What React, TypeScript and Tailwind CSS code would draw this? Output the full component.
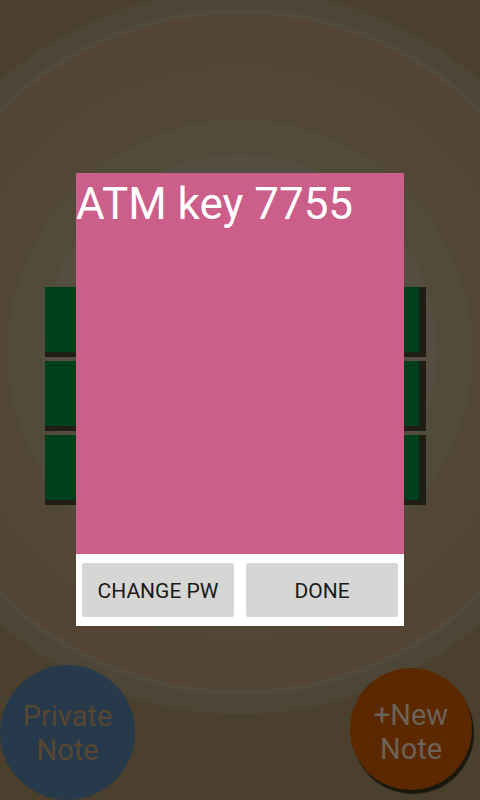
import React from 'react';

const font = { fontFamily: 'Roboto, "Noto Sans", sans-serif' };

const NoteCard = () => (
  <div className="w-[381px] h-[70px] bg-[#003f1b] border-r-[7px] border-b-[5px] border-[#1e1e15]" />
);

const App = () => {
  return (
    <div
      className="relative w-[480px] h-[800px] overflow-hidden bg-[#4b3f2d] bg-[image:radial-gradient(circle_at_240px_352px,#564d42_0px,#564d42_197px,#514c3a_197px,#514c3a_232px,#524737_232px,#524737_288px,#534433_288px,#534433_338px,#524b3d_338px,#524b3d_343px,#4d4636_343px,#4d4636_362px,#4b3f2d_362px)]"
      style={font}
    >
      {/* Notes list behind the dialog */}
      <div className="flex flex-col gap-[4px] pt-[287px] pl-[45px]">
        <NoteCard />
        <NoteCard />
        <NoteCard />
      </div>

      {/* Floating buttons */}
      <div className="absolute left-0 top-[665px] w-[135px] h-[135px] rounded-full bg-[#263a4b] flex items-center justify-center">
        <span className="text-[29px] leading-[34px] text-center text-[#584630]">
          Private
          <br />
          Note
        </span>
      </div>
      <div className="absolute left-[350px] top-[668px] w-[122px] h-[122px] rounded-full bg-[#5b2800] shadow-[2px_4px_1px_rgba(20,20,12,0.9)] flex items-center justify-center">
        <span className="text-[29px] leading-[34px] text-center text-[#6c6258] pt-[6px]">
          +New
          <br />
          Note
        </span>
      </div>

      {/* Note dialog */}
      <div className="absolute left-[76px] top-[173px] w-[328px] h-[453px] bg-white flex flex-col">
        <div className="flex-1 bg-[#cc5e8a] pt-[5px]">
          <h1 className="text-[44px] leading-[52px] text-white font-normal">ATM key 7755</h1>
        </div>
        <div className="h-[72px] flex items-center gap-[12px] px-[6px]">
          <button className="flex-1 h-[54px] pt-[3px] rounded-[2px] bg-[#d6d6d4] text-[21px] text-[#1a1a1a]">
            CHANGE PW
          </button>
          <button className="flex-1 h-[54px] pt-[3px] rounded-[2px] bg-[#d6d6d4] text-[21px] text-[#1a1a1a]">
            DONE
          </button>
        </div>
      </div>
    </div>
  );
};

export default App;
